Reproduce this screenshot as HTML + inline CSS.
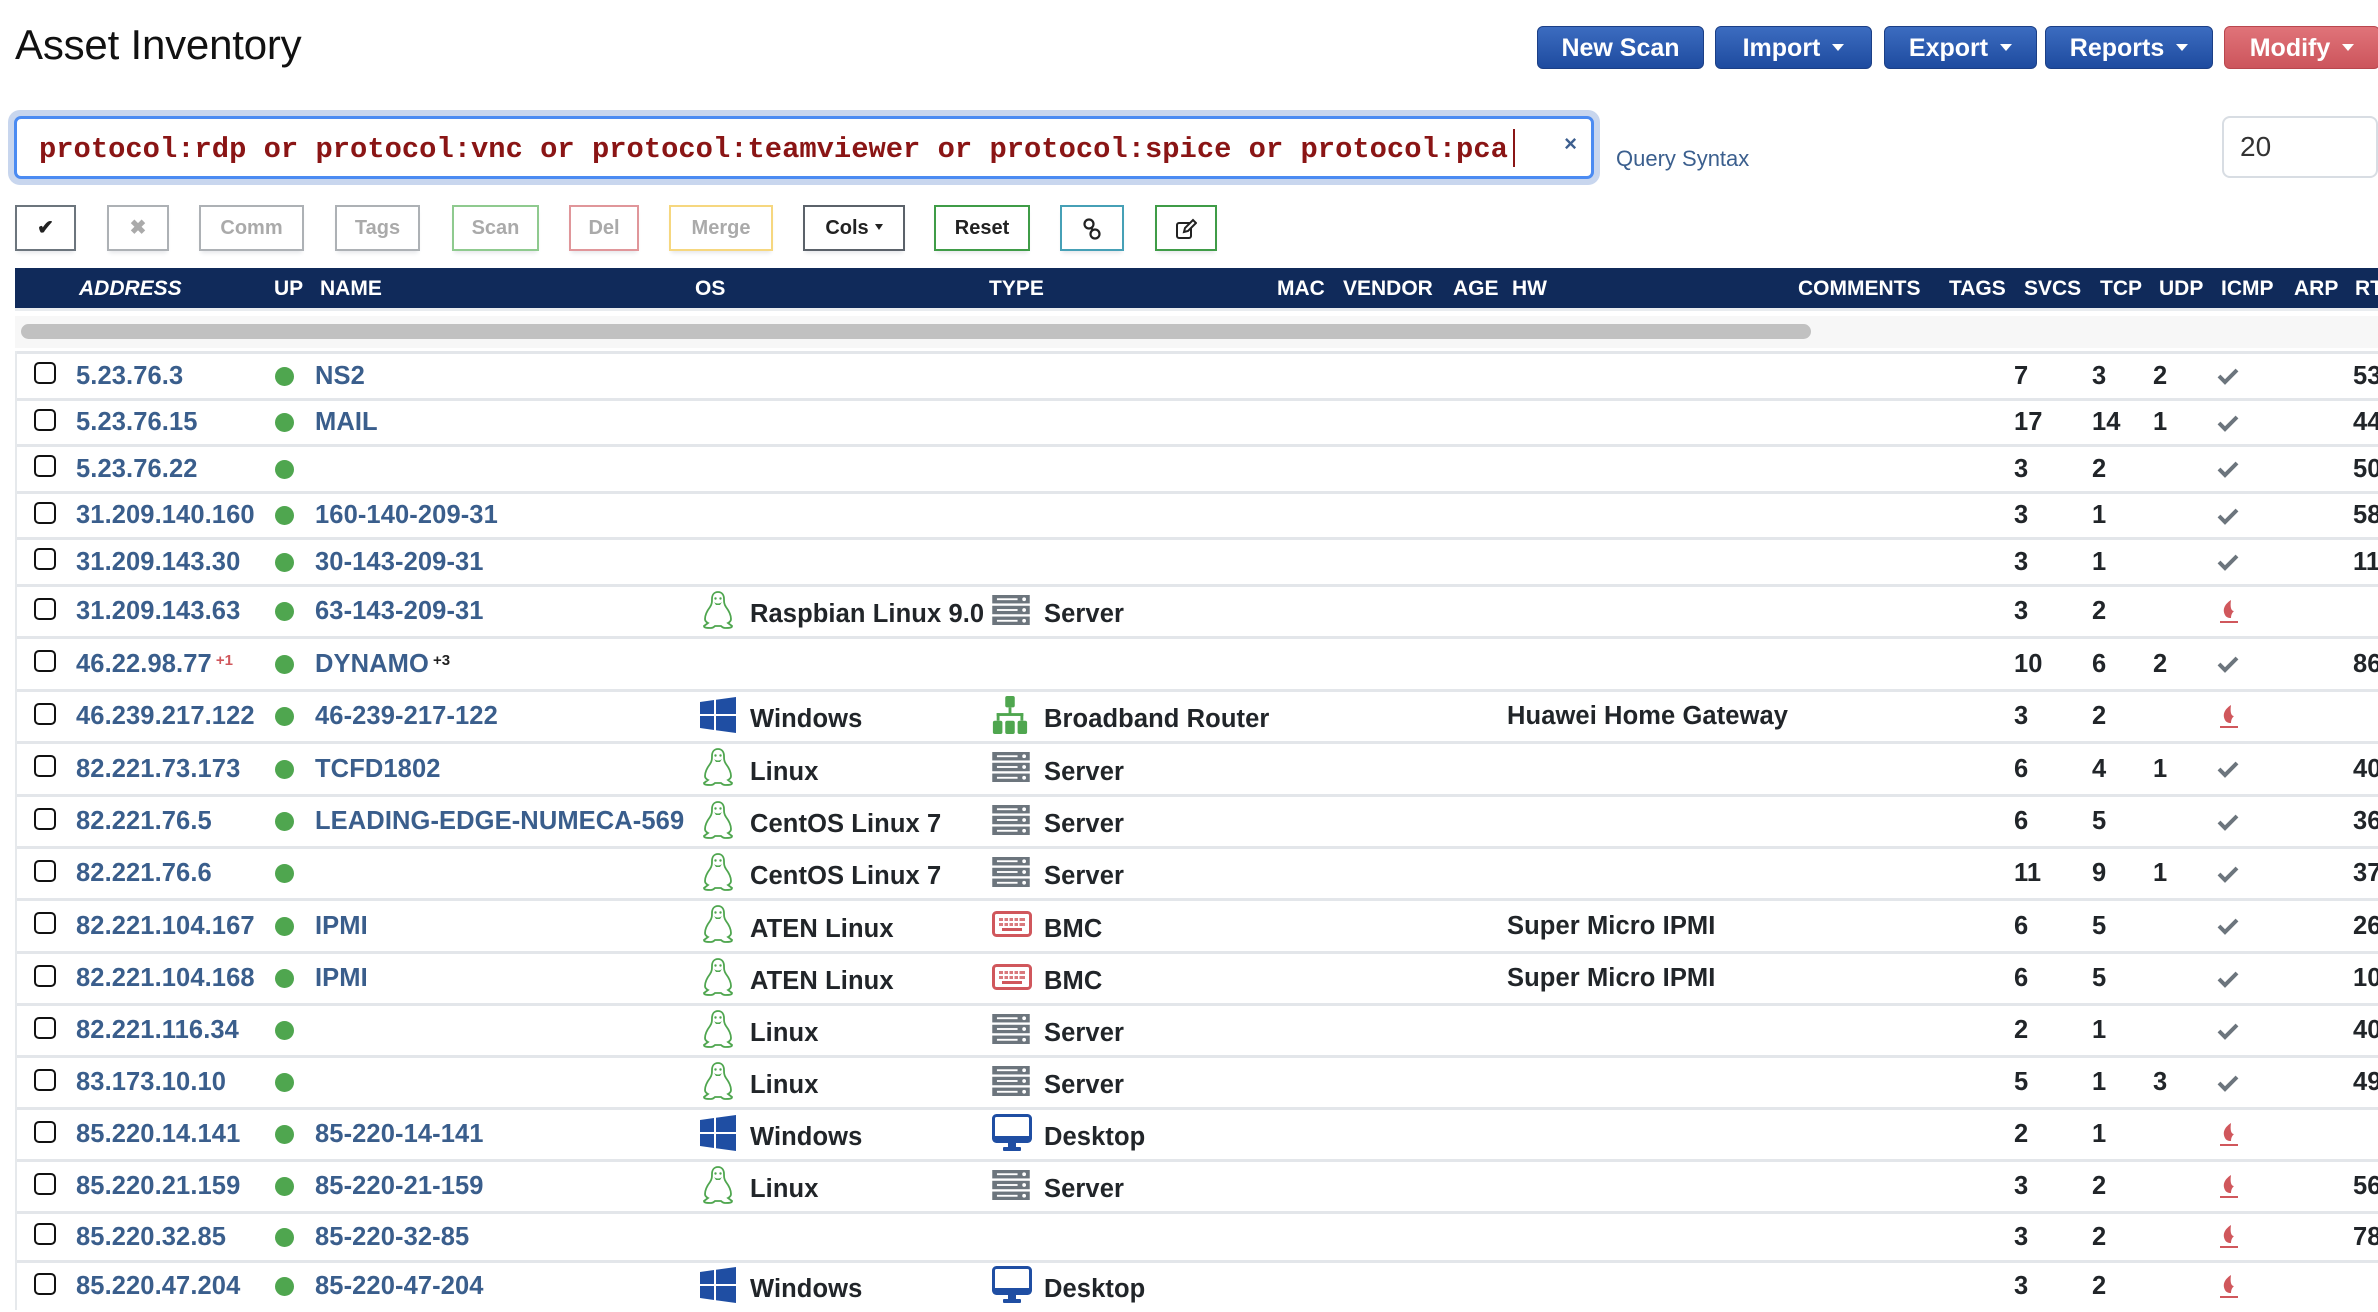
<!DOCTYPE html>
<html><head><meta charset="utf-8">
<style>
*{box-sizing:border-box;margin:0;padding:0}
body{width:2378px;height:1312px;overflow:hidden;background:#fff;font-family:"Liberation Sans",Arial,sans-serif;color:#212529;position:relative}
h1{position:absolute;left:15px;top:21px;font-size:42px;font-weight:normal;color:#111;letter-spacing:-0.2px}
.tb{position:absolute;top:26px;height:43px;border-radius:6px;color:#fff;font-weight:bold;font-size:25px;line-height:43px;text-align:center;background:linear-gradient(#3c6cc0,#1e4b9f);border:1px solid #1b3f86}
.tb.red{background:linear-gradient(#e07379,#cc555c);border-color:#b9474e}
.car{display:inline-block;width:0;height:0;border-left:6px solid transparent;border-right:6px solid transparent;border-top:7px solid #fff;vertical-align:middle;margin-left:12px;position:relative;top:-2px}
.search{position:absolute;left:8px;top:110px;width:1592px;height:75px;border-radius:12px;background:#c8d6ee}
.search .in{position:absolute;left:6px;top:6px;right:6px;bottom:6px;background:#fff;border:3px solid #4b8bf2;border-radius:7px}
.search .txt{position:absolute;left:22px;top:14px;font-family:"Liberation Mono",monospace;font-weight:bold;font-size:28.8px;color:#8a1515;white-space:pre}
.search .cur{position:absolute;left:1496px;top:10px;width:2px;height:38px;background:#8a1515}
.search .x{position:absolute;right:14px;top:12px;font-size:22px;color:#3d5f8f;font-weight:bold}
.qs{position:absolute;left:1616px;top:146px;font-size:22px;color:#3b5f8e}
.num{position:absolute;left:2222px;top:116px;width:156px;height:62px;border:2px solid #d8dde3;border-radius:8px;font-size:28px;line-height:58px;padding-left:16px;color:#333}
.bt{position:absolute;top:205px;height:46px;border:2px solid;background:#fff;font-size:20px;font-weight:bold;line-height:42px;text-align:center;box-shadow:0 4px 4px -2px #e5e7ea}
.hdr{position:absolute;left:15px;top:268px;width:2363px;height:43px;background:#102a5a;border-bottom:3px solid #e9ecef}
.hdr span{position:absolute;top:9px;color:#fff;font-weight:bold;font-size:21px}
.sbar{position:absolute;left:15px;top:316px;width:2363px;height:32px;background:#f7f7f7}
.sbar div{position:absolute;left:6px;top:8px;width:1790px;height:15px;border-radius:8px;background:#c1c1c1}
.tbl{position:absolute;left:15px;top:351px;width:2363px;border-left:2px solid #e6e9ec}
.r{position:relative;border-top:3px solid #e3e6ea;font-weight:bold;font-size:25.5px;letter-spacing:0.1px}
.r>*{position:absolute}
.r .t{top:0;bottom:0;display:flex;align-items:center;white-space:nowrap}
.cb{left:17px;width:22px;height:22px;border:2px solid #111;border-radius:5px;background:#fff}
.ip{left:59px;color:#3a5e8c}
.dot{left:258px;width:19px;height:19px;border-radius:50%;background:#4fa64f}
.nm{left:298px;color:#3a5e8c}
.os{left:733px}
.ty{left:1027px}
.hw{left:1490px}
.c1{left:1997px}.c2{left:2075px}.c3{left:2136px}.c5{left:2336px}
sup{font-size:15px;position:relative;top:-4px;vertical-align:top;margin-left:4px}
</style></head><body>
<h1>Asset Inventory</h1>
<div class="tb" style="left:1537px;width:167px">New Scan</div>
<div class="tb" style="left:1715px;width:157px">Import<span class="car"></span></div>
<div class="tb" style="left:1884px;width:153px">Export<span class="car"></span></div>
<div class="tb" style="left:2045px;width:168px">Reports<span class="car"></span></div>
<div class="tb red" style="left:2224px;width:156px">Modify<span class="car"></span></div>

<div class="search"><div class="in"><div class="txt">protocol:rdp or protocol:vnc or protocol:teamviewer or protocol:spice or protocol:pca</div><div class="cur"></div><div class="x">×</div></div></div>
<div class="qs">Query Syntax</div>
<div class="num">20</div>

<div class="bt" style="left:15px;width:61px;border-color:#6c757d;color:#222">✔</div>
<div class="bt" style="left:107px;width:62px;border-color:#adb1b5;color:#aaa">✖</div>
<div class="bt" style="left:199px;width:105px;border-color:#adb1b5;color:#aaa">Comm</div>
<div class="bt" style="left:335px;width:85px;border-color:#adb1b5;color:#aaa">Tags</div>
<div class="bt" style="left:452px;width:87px;border-color:#8fca8f;color:#aaa">Scan</div>
<div class="bt" style="left:569px;width:70px;border-color:#e0969a;color:#aaa">Del</div>
<div class="bt" style="left:669px;width:104px;border-color:#f6d77f;color:#aaa">Merge</div>
<div class="bt" style="left:803px;width:102px;border-color:#5b626a;color:#222">Cols<span class="car" style="border-top-color:#222;margin-left:6px;border-width:6px 4px 0"></span></div>
<div class="bt" style="left:934px;width:96px;border-color:#3f9c47;color:#222">Reset</div>
<div class="bt" style="left:1060px;width:64px;border-color:#46a0b6;color:#222"><svg width="20" height="24" viewBox="0 0 20 24" style="vertical-align:middle"><circle cx="7" cy="7" r="4.5" fill="none" stroke="#222" stroke-width="2.2"/><circle cx="13" cy="17" r="4.5" fill="none" stroke="#222" stroke-width="2.2"/><path d="M9 10l2 4" stroke="#222" stroke-width="2.2"/></svg></div>
<div class="bt" style="left:1155px;width:62px;border-color:#3f9c47;color:#222"><svg width="22" height="22" viewBox="0 0 22 22" style="vertical-align:middle"><rect x="2" y="5" width="14" height="15" rx="2" fill="none" stroke="#222" stroke-width="2"/><path d="M9 14l1-4 8-8 3 3-8 8z" fill="#fff" stroke="#222" stroke-width="2"/></svg></div>

<div class="hdr">
<span style="left:64px;font-style:italic">ADDRESS</span><span style="left:259px">UP</span><span style="left:305px">NAME</span><span style="left:680px">OS</span><span style="left:974px">TYPE</span><span style="left:1262px">MAC</span><span style="left:1328px">VENDOR</span><span style="left:1438px">AGE</span><span style="left:1497px">HW</span><span style="left:1783px">COMMENTS</span><span style="left:1934px">TAGS</span><span style="left:2009px">SVCS</span><span style="left:2085px">TCP</span><span style="left:2144px">UDP</span><span style="left:2206px">ICMP</span><span style="left:2279px">ARP</span><span style="left:2340px">RT</span>
</div>
<div class="sbar"><div></div></div>

<svg width="0" height="0" style="position:absolute">
<defs>
<symbol id="lin" viewBox="0 0 32 40"><path d="M16 2c-4 0-6 3-6 7 0 3 0 5-2 8-3 4-5 8-5 12 0 2 1 3 3 4l-4 3c0 2 3 2 7 2 2 0 3-1 4-2h6c1 1 2 2 4 2 4 0 7 0 7-2l-4-3c2-1 3-2 3-4 0-4-2-8-5-12-2-3-2-5-2-8 0-4-2-7-6-7z" fill="none" stroke="#4fa64f" stroke-width="1.8"/><path d="M12 12c2 2 6 2 8 0l-2 3h-4z" fill="#4fa64f"/><circle cx="13.5" cy="8.5" r="1.2" fill="#4fa64f"/><circle cx="18.5" cy="8.5" r="1.2" fill="#4fa64f"/></symbol>
<symbol id="srv" viewBox="0 0 40 32"><g fill="#6c757d"><rect x="0" y="0" width="40" height="9"/><rect x="0" y="11.5" width="40" height="9"/><rect x="0" y="23" width="40" height="9"/></g><g fill="#fff"><rect x="5" y="3.5" width="22" height="2"/><rect x="5" y="15" width="22" height="2"/><rect x="5" y="26.5" width="22" height="2"/><circle cx="34" cy="4.5" r="2"/><circle cx="34" cy="16" r="2"/><circle cx="34" cy="27.5" r="2"/></g></symbol>
<symbol id="win" viewBox="0 0 36 36"><g fill="#1f4ea3"><path d="M0 5l14-2v14H0z"/><path d="M16 2.7L36 0v17H16z"/><path d="M0 19h14v14L0 31z"/><path d="M16 19h20v17l-20-2.7z"/></g></symbol>
<symbol id="rtr" viewBox="0 0 36 40"><g fill="#4fa64f"><rect x="13" y="0" width="10" height="12" rx="2"/><rect x="16.5" y="12" width="3" height="8"/><rect x="4" y="18" width="28" height="3"/><rect x="4" y="18" width="3" height="8"/><rect x="29" y="18" width="3" height="8"/><rect x="0" y="26" width="10" height="14" rx="2"/><rect x="13" y="26" width="10" height="14" rx="2"/><rect x="26" y="26" width="10" height="14" rx="2"/></g></symbol>
<symbol id="bmc" viewBox="0 0 40 26"><rect x="1.5" y="1.5" width="37" height="23" rx="3" fill="none" stroke="#d0575c" stroke-width="3"/><g fill="#d0575c"><rect x="7" y="7" width="26" height="3" opacity=".8"/><rect x="7" y="12" width="26" height="3" opacity=".8"/><rect x="10" y="17" width="20" height="3"/></g><g fill="#fff"><rect x="11" y="7" width="1.5" height="8"/><rect x="16" y="7" width="1.5" height="8"/><rect x="21" y="7" width="1.5" height="8"/><rect x="26" y="7" width="1.5" height="8"/></g></symbol>
<symbol id="dsk" viewBox="0 0 40 38"><rect x="1.5" y="1.5" width="37" height="26" rx="3" fill="none" stroke="#1f4ea3" stroke-width="3"/><rect x="1.5" y="22" width="37" height="6" fill="#1f4ea3"/><rect x="16" y="28" width="8" height="6" fill="#1f4ea3"/><rect x="11" y="33" width="18" height="4" rx="1" fill="#1f4ea3"/></symbol>
<symbol id="chk" viewBox="0 0 22 18"><path d="M2 9l6 6L20 3" fill="none" stroke="#6c757d" stroke-width="4"/></symbol>
<symbol id="fir" viewBox="0 0 20 26"><path d="M12 1c-6 4-9 9-6 15 1 2 3 3 6 3 0-3 1-5 3-7-3 0-4-4-3-11z" fill="#d0575c"/><rect x="1" y="22" width="18" height="2" fill="#d0575c"/></symbol>
</defs></svg>

<div class="tbl" id="t"></div>
<script>
var H=[47,46,47,46,47,52,53,52,53,52,52,53,52,52,52,52,52,49,50];
var D=[
["5.23.76.3","NS2","","","","","","7","3","2","c","53"],
["5.23.76.15","MAIL","","","","","","17","14","1","c","44"],
["5.23.76.22","","","","","","","3","2","","c","50"],
["31.209.140.160","160-140-209-31","","","","","","3","1","","c","58"],
["31.209.143.30","30-143-209-31","","","","","","3","1","","c","11"],
["31.209.143.63","63-143-209-31","lin","Raspbian Linux 9.0","srv","Server","","3","2","","f",""],
["46.22.98.77<sup style='color:#d0575c'>+1</sup>","DYNAMO<sup style='color:#222'>+3</sup>","","","","","","10","6","2","c","86"],
["46.239.217.122","46-239-217-122","win","Windows","rtr","Broadband Router","Huawei Home Gateway","3","2","","f",""],
["82.221.73.173","TCFD1802","lin","Linux","srv","Server","","6","4","1","c","40"],
["82.221.76.5","LEADING-EDGE-NUMECA-569","lin","CentOS Linux 7","srv","Server","","6","5","","c","36"],
["82.221.76.6","","lin","CentOS Linux 7","srv","Server","","11","9","1","c","37"],
["82.221.104.167","IPMI","lin","ATEN Linux","bmc","BMC","Super Micro IPMI","6","5","","c","26"],
["82.221.104.168","IPMI","lin","ATEN Linux","bmc","BMC","Super Micro IPMI","6","5","","c","10"],
["82.221.116.34","","lin","Linux","srv","Server","","2","1","","c","40"],
["83.173.10.10","","lin","Linux","srv","Server","","5","1","3","c","49"],
["85.220.14.141","85-220-14-141","win","Windows","dsk","Desktop","","2","1","","f",""],
["85.220.21.159","85-220-21-159","lin","Linux","srv","Server","","3","2","","f","56"],
["85.220.32.85","85-220-32-85","","","","","","3","2","","f","78"],
["85.220.47.204","85-220-47-204","win","Windows","dsk","Desktop","","3","2","","f",""]];
var SZ={lin:[32,40],srv:[38,30],win:[36,36],rtr:[36,38],bmc:[40,26],dsk:[40,38]};
var h="";
for(var i=0;i<D.length;i++){var d=D[i],hh=H[i];
function ic(id,l){var s=SZ[id];return "<svg style='left:"+l+"px;top:"+((hh-3-s[1])/2-2)+"px' width='"+s[0]+"' height='"+s[1]+"'><use href='#"+id+"'/></svg>";}
var s="<div class='r' style='height:"+hh+"px'>";
s+="<div class='cb' style='top:"+((hh-3-22)/2-3)+"px'></div>";
s+="<div class='t ip'>"+d[0]+"</div>";
s+="<div class='dot' style='top:"+((hh-3-19)/2)+"px'></div>";
if(d[1])s+="<div class='t nm'>"+d[1]+"</div>";
if(d[2]){s+=ic(d[2],d[2]=="win"?683:685);s+="<div class='t os' style='padding-top:6px'>"+d[3]+"</div>";}
if(d[4]){s+=ic(d[4],975);s+="<div class='t ty' style='padding-top:6px'>"+d[5]+"</div>";}
if(d[6])s+="<div class='t hw'>"+d[6]+"</div>";
s+="<div class='t c1'>"+d[7]+"</div><div class='t c2'>"+d[8]+"</div><div class='t c3'>"+d[9]+"</div>";
if(d[10]=="c")s+="<svg style='left:2200px;top:"+((hh-3-18)/2)+"px' width='22' height='18'><use href='#chk'/></svg>";
else s+="<svg style='left:2202px;top:"+((hh-3-26)/2)+"px' width='20' height='26'><use href='#fir'/></svg>";
s+="<div class='t c5'>"+d[11]+"</div></div>";h+=s;}
document.getElementById("t").innerHTML=h;
</script>
</body></html>
